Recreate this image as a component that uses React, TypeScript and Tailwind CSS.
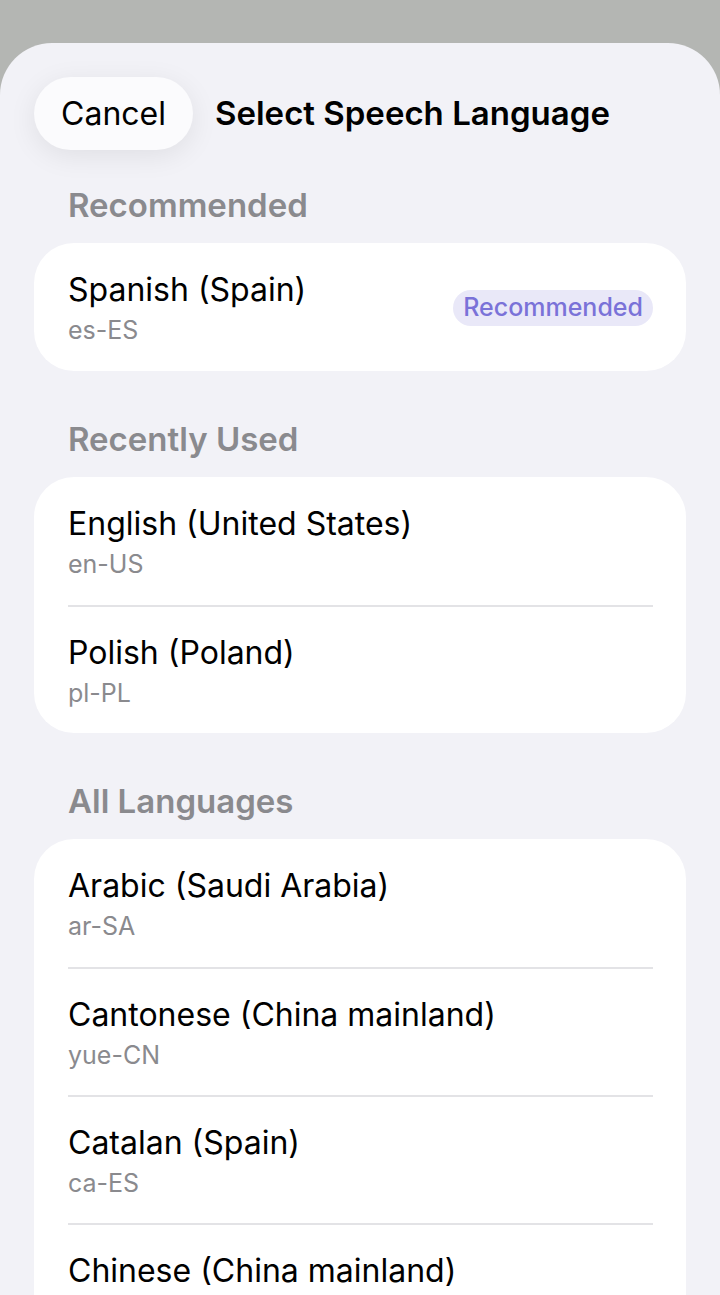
import React from "react";

type Lang = { name: string; code: string; badge?: boolean };

const sections: { title: string; items: Lang[] }[] = [
  { title: "Recommended", items: [{ name: "Spanish (Spain)", code: "es-ES", badge: true }] },
  {
    title: "Recently Used",
    items: [
      { name: "English (United States)", code: "en-US" },
      { name: "Polish (Poland)", code: "pl-PL" },
    ],
  },
  {
    title: "All Languages",
    items: [
      { name: "Arabic (Saudi Arabia)", code: "ar-SA" },
      { name: "Cantonese (China mainland)", code: "yue-CN" },
      { name: "Catalan (Spain)", code: "ca-ES" },
      { name: "Chinese (China mainland)", code: "zh-CN" },
      { name: "Chinese (Hong Kong)", code: "zh-HK" },
    ],
  },
];

export default function App() {
  return (
    <div
      className="h-[1295px] w-[720px] overflow-hidden bg-[#b4b6b3]"
      style={{ fontFamily: "Inter, 'Noto Sans', sans-serif" }}
    >
      <div className="h-[43px]" />
      <div className="min-h-[1252px] rounded-t-[52px] bg-[#f2f2f7] px-[34px] pt-[34px]">
        <div className="flex items-center gap-[22px]">
          <div className="flex h-[73px] w-[159px] items-center justify-center rounded-full bg-[#fbfbfd] text-[32px] text-black shadow-[0_6px_28px_rgba(0,0,0,0.08)]">
            Cancel
          </div>
          <div className="text-[33px] font-semibold text-black">Select Speech Language</div>
        </div>
        {sections.map((s, si) => (
          <div key={s.title} className={si === 0 ? "mt-[37px]" : "mt-[50px]"}>
            <div className="mb-[20px] h-[36px] pl-[34px] text-[33px] font-semibold leading-[36px] text-[#8a8a8e]">
              {s.title}
            </div>
            <div className="overflow-hidden rounded-[40px] bg-white">
              {s.items.map((it, i) => (
                <div key={it.code} className="relative">
                  {i > 0 && <div className="ml-[34px] mr-[33px] h-[2px] bg-[#e3e3e6]" />}
                  <div
                    className={`flex items-center justify-between pl-[34px] pr-[33px] ${
                      i > 0 ? "h-[126px]" : "h-[128px]"
                    }`}
                  >
                    <div className="flex flex-col pt-[2px]">
                      <div className="text-[32px] leading-[38px] text-black">{it.name}</div>
                      <div className="mt-[6px] text-[25px] leading-[30px] text-[#8a8a8e]">{it.code}</div>
                    </div>
                    {it.badge && (
                      <div className="mt-[2px] flex h-[36px] items-center rounded-full bg-[#e9e8f8] px-[10px] text-[25px] font-medium text-[#7a72d8]">
                        Recommended
                      </div>
                    )}
                  </div>
                </div>
              ))}
            </div>
          </div>
        ))}
      </div>
    </div>
  );
}
